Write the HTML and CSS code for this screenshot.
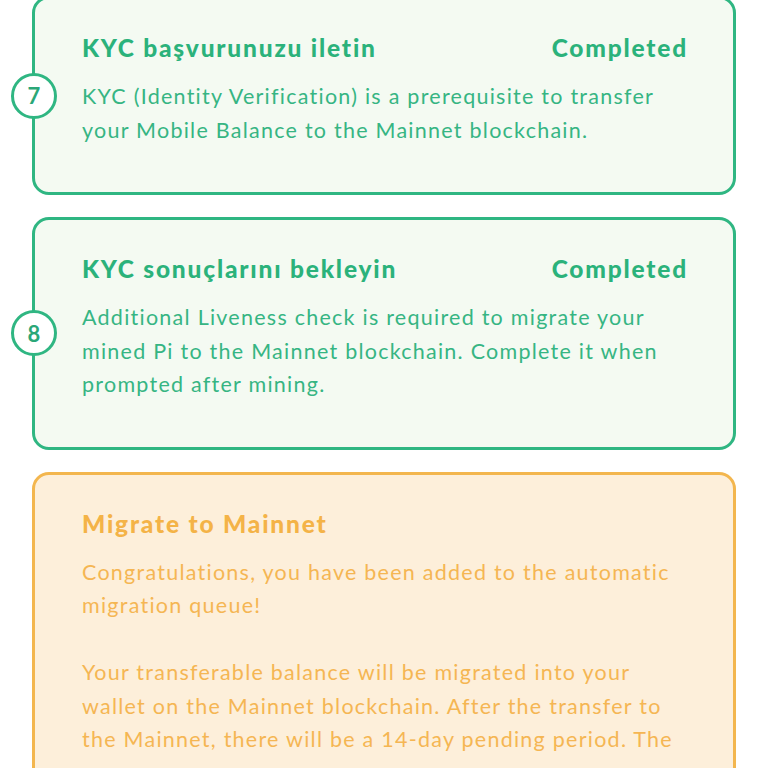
FILE: index.html
```html
<!DOCTYPE html>
<html lang="tr">
<head>
<meta charset="utf-8">
<title>Steps</title>
<link rel="stylesheet" href="styles.css">
</head>
<body>
<div class="steps">
  <section class="card card-done">
    <div class="badge">7</div>
    <div class="card-head">
      <h2 class="card-title">KYC başvurunuzu iletin</h2>
      <span class="card-status">Completed</span>
    </div>
    <p class="card-text">KYC (Identity Verification) is a prerequisite to transfer<br>your Mobile Balance to the Mainnet blockchain.</p>
  </section>
  <section class="card card-done">
    <div class="badge">8</div>
    <div class="card-head">
      <h2 class="card-title">KYC sonuçlarını bekleyin</h2>
      <span class="card-status">Completed</span>
    </div>
    <p class="card-text">Additional Liveness check is required to migrate your<br>mined Pi to the Mainnet blockchain. Complete it when<br>prompted after mining.</p>
  </section>
  <section class="card card-pending">
    <div class="card-head">
      <h2 class="card-title">Migrate to Mainnet</h2>
    </div>
    <p class="card-text">Congratulations, you have been added to the automatic<br>migration queue!<br><br>Your transferable balance will be migrated into your<br>wallet on the Mainnet blockchain. After the transfer to<br>the Mainnet, there will be a 14-day pending period. The</p>
  </section>
</div>
</body>
</html>
```
FILE: styles.css
```css
html, body {
  margin: 0;
  padding: 0;
  background: #ffffff;
  font-family: "Lato", "Noto Sans", sans-serif;
}
.steps {
  margin-top: -4px;
  padding: 0 32px;
  display: flex;
  flex-direction: column;
  gap: 22px;
}
.card {
  position: relative;
  border: 3px solid #2fb682;
  border-radius: 17px;
  background: #f4faf2;
  padding: 34px 47px 45px 47px;
}
.card-done {
  color: #36b583;
}
.card-pending {
  border-color: #f3b64e;
  background: #fdefda;
  color: #f5b653;
  min-height: 400px;
}
.badge {
  position: absolute;
  left: -24px;
  top: 50%;
  transform: translateY(-50%);
  width: 40px;
  height: 40px;
  border: 3px solid #2fb682;
  border-radius: 50%;
  background: #ffffff;
  color: #2aa777;
  font-weight: 700;
  font-size: 22px;
  display: flex;
  align-items: center;
  justify-content: center;
}
.card-head {
  display: flex;
  justify-content: space-between;
  align-items: baseline;
}
.card-title {
  margin: 0;
  font-size: 24.5px;
  line-height: 30px;
  font-weight: 900;
  letter-spacing: 1.8px;
  color: #2bb27b;
}
.card-pending .card-title {
  color: #f4b347;
}
.card-status {
  font-size: 24.5px;
  line-height: 30px;
  font-weight: 900;
  letter-spacing: 1.8px;
  margin-right: -2px;
  color: #2bb27b;
}
.card-text {
  margin: 17px 0 0;
  font-size: 21.5px;
  line-height: 33.5px;
  letter-spacing: 1.25px;
}
```
